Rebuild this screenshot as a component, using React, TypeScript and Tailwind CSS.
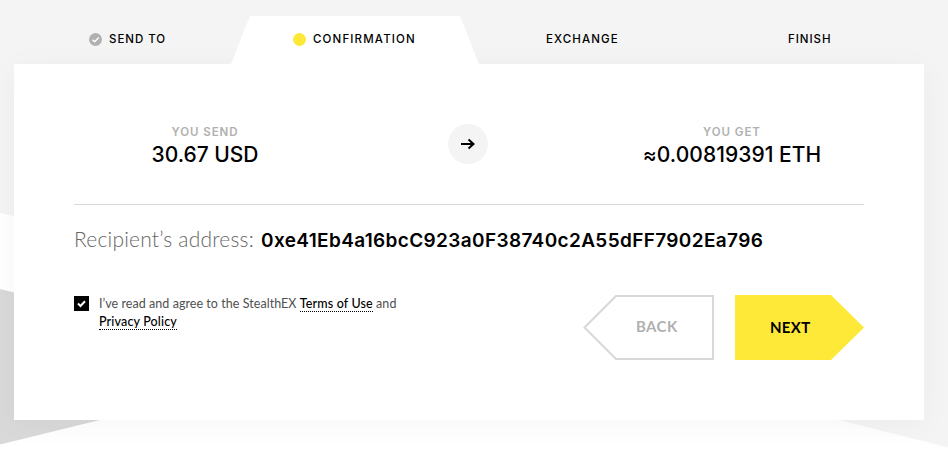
import React from "react";

const sans = "font-['Inter','Liberation_Sans',sans-serif]";
const humanist = "font-['Lato','Open_Sans',sans-serif]";

function Backdrop() {
  return (
    <svg className="absolute inset-0" width="948" height="452" viewBox="0 0 948 452" aria-hidden="true">
      <rect width="948" height="452" fill="#f4f4f4" />
      <path d="M0 213 L400 309 L839 420 L948 447.500 V452 H0 Z" fill="#fff" />
      <path d="M0 289 L300 363 L100 420 L0 444.500 Z" fill="#d9d9d9" />
    </svg>
  );
}

function Tabs() {
  const label = "text-[11.5px] leading-4 font-medium whitespace-nowrap text-black";
  return (
    <nav className={`flex h-12 ${sans}`}>
      <div className="flex w-[217px] items-center pl-[75px] pb-[2px]">
        <svg width="13" height="13" viewBox="0 0 13 13" className="mr-[7px]">
          <circle cx="6.500" cy="6.500" r="6.500" fill="#b0b0b0" />
          <path d="M3.500 6.700 L5.600 8.700 L9.800 4.500" fill="none" stroke="#fff" strokeWidth="1.400" />
        </svg>
        <span className={`${label} tracking-[0.95px]`}>SEND TO</span>
      </div>
      <div className="flex w-[248px] items-center bg-white pl-[62px] pb-[2px] [clip-path:polygon(19px_0,229px_0,248px_48px,0_48px)]">
        <span className="mr-[7px] h-[13px] w-[13px] rounded-full bg-[#fee838]" />
        <span className={`${label} tracking-[1.15px]`}>CONFIRMATION</span>
      </div>
      <div className="flex w-[243px] items-center pl-[67px] pb-[2px]">
        <span className={`${label} tracking-[1.1px]`}>EXCHANGE</span>
      </div>
      <div className="flex items-center pl-[66px] pb-[2px]">
        <span className={`${label} tracking-[0.95px]`}>FINISH</span>
      </div>
    </nav>
  );
}

export default function App() {
  const link = "border-b border-dotted border-black font-medium tracking-[0.15px] text-black";
  return (
    <div className="relative h-[452px] w-[948px] overflow-hidden">
      <Backdrop />
      <div className="relative pl-[14px] pt-4">
        <div className="relative z-10"><Tabs /></div>
        <main className="h-[356px] w-[910px] bg-white px-[60px] shadow-[0_4px_30px_rgba(0,0,0,0.04)]">
          <section className={`flex h-[141px] justify-between border-b border-[#d8d8d8] pt-[60px] text-center ${sans}`}>
            <div className="w-[262px]">
              <div className="text-[11.5px] leading-4 font-semibold tracking-[0.95px] text-[#b0b0b0]">YOU SEND</div>
              <div className="text-[21px] leading-[30px] font-medium text-black">30.67 USD</div>
            </div>
            <div className="flex h-10 w-10 items-center justify-center rounded-full bg-[#f4f4f4]">
              <svg width="14" height="12" viewBox="0 0 14 12" fill="none" stroke="#000" strokeWidth="2" className="-mt-px">
                <path d="M0 6 H12.500 M7.500 1.500 L12.500 6 L7.500 10.500" />
              </svg>
            </div>
            <div className="w-[264px]">
              <div className="text-[11.5px] leading-4 font-semibold tracking-[0.95px] text-[#b0b0b0]">YOU GET</div>
              <div className="text-[21px] leading-[30px] font-medium tracking-[0.05px] text-black">≈0.00819391 ETH</div>
            </div>
          </section>
          <section className="flex h-[90px] items-start pt-[20px] whitespace-nowrap">
            <span className={`w-[187px] text-[21px] leading-[28px] font-light tracking-[0.2px] text-[#666] ${humanist}`}>Recipient’s address:</span>
            <span className={`text-[19px] leading-[31px] font-semibold tracking-[0.36px] text-black ${sans}`}>0xe41Eb4a16bcC923a0F38740c2A55dFF7902Ea796</span>
          </section>
          <section className="flex">
            <span className="mt-px flex h-[15px] w-[15px] items-center justify-center bg-black">
              <svg width="9" height="8" viewBox="0 0 9 8" fill="none" stroke="#fff" strokeWidth="2">
                <path d="M1 3.500 L3.500 6 L8 1.200" />
              </svg>
            </span>
            <p className={`ml-[10px] w-[410px] text-[12.5px] leading-[18px] tracking-[0.05px] text-[#505050] ${humanist}`}>
              I’ve read and agree to the StealthEX{" "}
              <a className={link}>Terms of Use</a> and
              <br />
              <a className={link}>Privacy Policy</a>
            </p>
            <div className={`ml-[74px] flex text-[15px] font-bold ${humanist}`}>
              <button className="grid h-[65px] w-[132px] grid-cols-1 grid-rows-1 items-center">
                <svg className="col-start-1 row-start-1" width="132" height="65" viewBox="0 0 132 65">
                  <path d="M1.500 32.500 L33 1 H130 V64 H33 Z" fill="#fff" stroke="#d8d8d8" strokeWidth="2" />
                </svg>
                <span className="col-start-1 row-start-1 -mt-[2px] pl-[53px] text-left tracking-[0.4px] text-[#b0b0b0]">BACK</span>
              </button>
              <button className="ml-5 h-[65px] w-[129px] bg-[#fee838] pl-[35px] text-left tracking-[0.3px] text-black [clip-path:polygon(0_0,96px_0,100%_50%,96px_100%,0_100%)]">
                NEXT
              </button>
            </div>
          </section>
        </main>
      </div>
    </div>
  );
}
